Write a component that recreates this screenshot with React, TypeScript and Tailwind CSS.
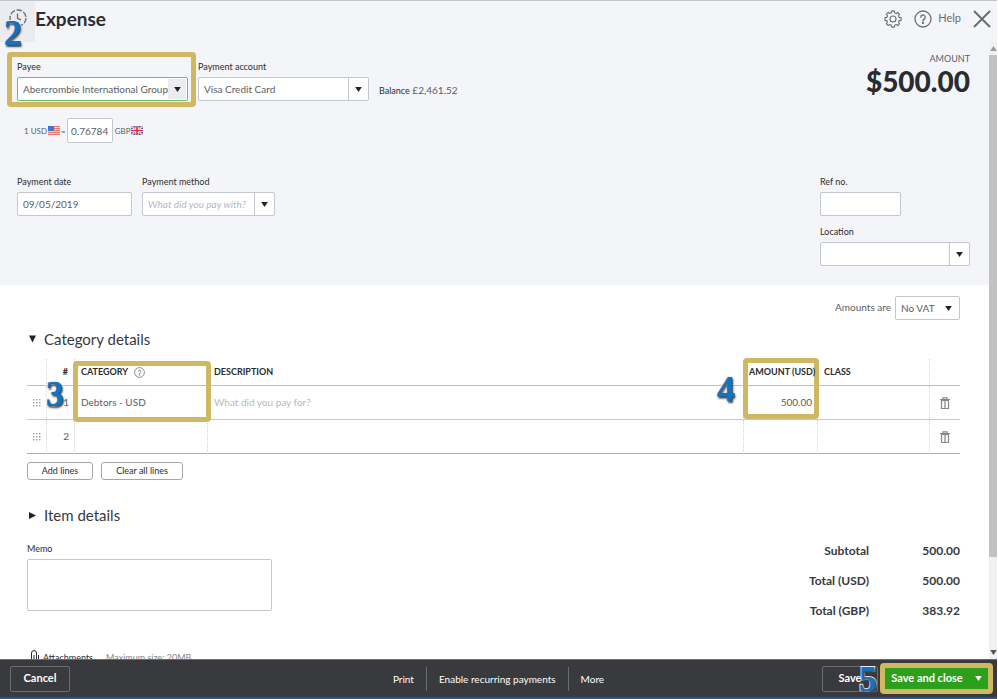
import type { ReactNode } from "react";
import clsx from "clsx";

const frame =
  "pointer-events-none absolute rounded-sm border-[5px] border-[#cfb763]";

function Caret({ className }: { className?: string }) {
  return (
    <svg viewBox="0 0 8 6" className={clsx("h-[5px] w-[7px]", className)} aria-hidden="true">
      <path d="M0 0h8L4 6z" fill="currentColor" />
    </svg>
  );
}

function Step({ n, className }: { n: number; className: string }) {
  return (
    <span
      className={clsx(
        "pointer-events-none absolute z-10 font-[family-name:'Liberation_Serif',serif] text-[36px] leading-8 font-bold text-[#1272c4] [-webkit-text-stroke:2px_white] [paint-order:stroke_fill] [text-shadow:0_0_1px_#444,1px_2px_2px_#444]",
        className
      )}
    >
      {n}
    </span>
  );
}

function Field({ id, label, className, children }: { id: string; label: string; className?: string; children: ReactNode }) {
  return (
    <div className={clsx("flex flex-col gap-[2px]", className)}>
      <label htmlFor={id} className="text-[9px] leading-4 text-[#2b2c2f]">
        {label}
      </label>
      {children}
    </div>
  );
}

interface DropdownProps {
  id: string;
  value: string;
  active?: boolean;
  placeholder?: boolean;
}

function Dropdown({ id, value, active, placeholder }: DropdownProps) {
  return (
    <div className="relative flex">
      <select
        id={id}
        className={clsx(
          "h-6 w-full appearance-none rounded-xs border bg-white pl-[5px] text-[10px] outline-none",
          active ? "border-[#6cbf68] pr-[18px]" : "border-[#c3c7cf] pr-[22px]",
          placeholder ? "text-[#b5b8bf] italic" : "text-[#5b5d63]"
        )}
      >
        <option>{value}</option>
      </select>
      <span
        className={clsx(
          "pointer-events-none absolute flex items-center justify-center text-[#222]",
          active
            ? "inset-y-[2px] right-[2px] w-[18px] bg-[#ebecf1]"
            : "inset-y-px right-px w-5 border-l border-[#c3c7cf]"
        )}
      >
        <Caret />
      </span>
    </div>
  );
}

function HelpIcon({ className }: { className: string }) {
  return (
    <svg viewBox="0 0 18 18" className={className} fill="none" stroke="currentColor" strokeWidth="1.3" aria-hidden="true">
      <circle cx="9" cy="9" r="8" />
      <path d="M6.8 7.2a2.2 2.2 0 1 1 3.5 1.8c-.8.6-1.3.9-1.3 1.9" strokeLinecap="round" />
      <circle cx="9" cy="13" r=".5" fill="currentColor" />
    </svg>
  );
}

function GearIcon() {
  // outline with eight teeth, four points per tooth
  const points = Array.from({ length: 32 }, (_, i) => {
    const tooth = Math.floor(i / 4);
    const offset = [-0.25, -0.17, 0.17, 0.25][i % 4];
    const r = i % 4 === 1 || i % 4 === 2 ? 8.2 : 6.4;
    const a = (tooth * Math.PI) / 4 + offset;
    return `${(9 + r * Math.cos(a)).toFixed(2)},${(9 + r * Math.sin(a)).toFixed(2)}`;
  }).join(" ");
  return (
    <svg viewBox="0 0 18 18" className="size-[18px]" fill="none" stroke="currentColor" strokeWidth="1.1" strokeLinejoin="round" aria-hidden="true">
      <polygon points={points} />
      <circle cx="9" cy="9" r="3" />
    </svg>
  );
}

function ClockIcon() {
  return (
    <svg viewBox="0 0 18 18" className="size-[18px]" fill="none" stroke="#6b6c72" strokeWidth="1.3" aria-hidden="true">
      <circle cx="9" cy="9" r="8" strokeDasharray="5.5 1.7" />
      <path d="M8.5 4.5v4.8l3.5 1.5" />
    </svg>
  );
}

function TrashIcon() {
  return (
    <svg viewBox="0 0 10 12" className="mx-auto h-3 w-[10px]" fill="none" stroke="#85878c" aria-hidden="true">
      <path d="M1.5 3.5h7v8h-7zM5 4v7M0 2.5h10M3 2.5V.8h4v1.7" strokeWidth="1.2" />
    </svg>
  );
}

function GripIcon() {
  return (
    <svg viewBox="0 0 8 8" className="ml-[6px] size-2" fill="#9b9da3" aria-hidden="true">
      {[0, 3, 6].map((y) => [0, 3, 6].map((x) => <rect key={`${x}-${y}`} x={x} y={y} width="1.4" height="1.4" />))}
    </svg>
  );
}

function UsFlag() {
  return (
    <svg viewBox="0 0 12 9" className="h-[9px] w-3" aria-label="US">
      <rect width="12" height="9" fill="#f6c9c3" />
      <path d="M0 .5h12M0 2.5h12M0 4.5h12M0 6.5h12M0 8.5h12" stroke="#e8786c" />
      <rect width="6" height="5" fill="#3f74d1" />
    </svg>
  );
}

function UkFlag() {
  return (
    <svg viewBox="0 0 12 9" className="h-[9px] w-3" aria-label="UK">
      <rect width="12" height="9" fill="#3b55a5" />
      <path d="M0 0l12 9M12 0L0 9" stroke="#fff" strokeWidth="1.8" />
      <path d="M0 0l12 9M12 0L0 9" stroke="#d8414f" strokeWidth=".6" />
      <path d="M6 0v9M0 4.5h12" stroke="#fff" strokeWidth="3" />
      <path d="M6 0v9M0 4.5h12" stroke="#dd2c3c" strokeWidth="1.6" />
    </svg>
  );
}

function TopBar() {
  return (
    <header className="flex h-[42px] shrink-0 items-stretch border-t border-[#c4c5ca] bg-[#f4f5f9]">
      <div className="relative flex w-[35px] justify-center bg-[#ebecf1] pt-2">
        <ClockIcon />
        <Step n={2} className="top-4 left-1" />
      </div>
      <h1 className="flex-1 pt-[6px] text-[19px] leading-6 font-bold text-[#2b2c2f]">Expense</h1>
      <div className="flex items-center pr-[6px] pb-[6px] text-[#6b6c72]">
        <button type="button" aria-label="Settings">
          <GearIcon />
        </button>
        <button type="button" className="ml-3 flex items-center gap-[6px] text-[11px]">
          <HelpIcon className="size-[18px]" />
          Help
        </button>
        <button type="button" aria-label="Close" className="ml-3">
          <svg viewBox="0 0 18 18" className="size-[18px]" stroke="currentColor" strokeWidth="2" aria-hidden="true">
            <path d="M1 1l16 16M17 1L1 17" />
          </svg>
        </button>
      </div>
    </header>
  );
}

function PaymentForm() {
  return (
    <section className="flex h-[243px] justify-between bg-[#f4f5f9] pt-[17px] pr-[19px] pl-[17px]">
      <div>
        <div className="flex gap-[10px]">
          <div className="relative w-[171px]">
            <Field id="payee" label="Payee">
              <Dropdown id="payee" value="Abercrombie International Group" active />
            </Field>
            <div className={clsx(frame, "-top-[7px] -right-2 -bottom-[6px] -left-[10px]")} />
          </div>
          <Field id="account" label="Payment account" className="w-[171px]">
            <Dropdown id="account" value="Visa Credit Card" />
          </Field>
          <p className="self-end pb-[2px] text-[10px] leading-4 text-[#5b5d63]">
            <span className="text-[9px] text-[#2b2c2f]">Balance</span> £2,461.52
          </p>
        </div>
        <div className="mt-[17px] flex items-center pl-[7px] text-[8px] text-[#5b5d63]">
          <label htmlFor="rate" className="flex items-center gap-px">
            1 USD <UsFlag /> =
          </label>
          <input
            id="rate"
            defaultValue="0.76784"
            className="mr-[2px] ml-px h-[25px] w-[46px] rounded-xs border border-[#c3c7cf] bg-white px-[3px] text-center text-[10px]"
          />
          <span className="flex items-center gap-px">
            GBP <UkFlag />
          </span>
        </div>
        <div className="mt-[31px] flex gap-[10px]">
          <Field id="date" label="Payment date" className="w-[115px]">
            <input
              id="date"
              defaultValue="09/05/2019"
              className="h-6 rounded-xs border border-[#c3c7cf] bg-white px-[5px] text-[10px] text-[#5b5d63]"
            />
          </Field>
          <Field id="method" label="Payment method" className="w-[133px]">
            <Dropdown id="method" value="What did you pay with?" placeholder />
          </Field>
        </div>
      </div>
      <div className="flex w-[150px] flex-col">
        <p className="-mt-2 text-right text-[9px] leading-4 text-[#5b5d63]">AMOUNT</p>
        <p className="text-right text-[28px] leading-7 font-black text-[#2b2c2f]">$500.00</p>
        <Field id="ref" label="Ref no." className="mt-[79px]">
          <input id="ref" className="h-6 w-[81px] rounded-xs border border-[#c3c7cf] bg-white px-[5px] text-[10px]" />
        </Field>
        <Field id="location" label="Location" className="mt-2">
          <Dropdown id="location" value="" />
        </Field>
      </div>
    </section>
  );
}

const dotted = "border-r border-r-[#d0d2d6] [border-right-style:dotted]";

function CategoryTable() {
  return (
    <table className="mt-[9px] w-full table-fixed border-separate border-spacing-0 text-[10px] text-[#5b5d63]">
      <colgroup>
        <col className="w-5" />
        <col className="w-7" />
        <col className="w-[133px]" />
        <col />
        <col className="w-[74px]" />
        <col className="w-[112px]" />
        <col className="w-[30px]" />
      </colgroup>
      <thead>
        <tr className="h-[27px] text-left text-[9px] text-[#2b2c2f] [&>th]:border-b [&>th]:border-b-[#b9bec8]">
          <th className={dotted} />
          <th className={clsx("relative pr-[6px] text-right", dotted)}>
            #
            <Step n={3} className="top-[19px] -left-px" />
          </th>
          <th className="relative pl-[6px]">
            <span className="flex items-center gap-[6px]">
              CATEGORY <HelpIcon className="size-[11px] text-[#6b6c72]" />
            </span>
            <div className={clsx(frame, "top-[2px] -right-[3px] -left-[2px] h-[61px]")} />
          </th>
          <th className="pl-[6px]">DESCRIPTION</th>
          <th className="relative pl-[5px] whitespace-nowrap">
            <div className={clsx(frame, "-top-px -right-px -left-px h-[61px]")} />
            <span className="relative">AMOUNT (USD)</span>
            <Step n={4} className="top-[14px] -left-[27px]" />
          </th>
          <th className={clsx("pl-[6px]", dotted)}>CLASS</th>
          <th />
        </tr>
      </thead>
      <tbody>
        {[1, 2].map((row) => (
          <tr
            key={row}
            className="h-[34px] [&>td]:border-b [&>td]:border-b-[#c6c8cc] last:[&>td]:border-b-[#a9abb0]"
          >
            <td className={dotted}>
              <GripIcon />
            </td>
            <td className={clsx("pr-[5px] text-right", dotted)}>{row}</td>
            <td className={clsx("pl-[6px]", dotted)}>{row === 1 && "Debtors - USD"}</td>
            <td className={clsx("pl-[6px] text-[#b5b8bf]", dotted)}>{row === 1 && "What did you pay for?"}</td>
            <td className={clsx("pr-[5px] text-right", dotted)}>{row === 1 && "500.00"}</td>
            <td className={dotted} />
            <td>
              <button type="button" aria-label={`Delete line ${row}`} className="block w-full">
                <TrashIcon />
              </button>
            </td>
          </tr>
        ))}
      </tbody>
    </table>
  );
}

const totals = [
  ["Subtotal", "500.00"],
  ["Total (USD)", "500.00"],
  ["Total (GBP)", "383.92"],
];

function Details() {
  const small = "h-[18px] rounded-[3px] border border-[#a5a7ad] text-[9px] text-[#2b2c2f]";
  return (
    <section className="pt-[11px] pr-[29px] pl-[27px]">
      <div className="flex items-start justify-end gap-1 text-[#5b5d63]">
        <label htmlFor="vat" className="text-[10px] leading-[22px]">
          Amounts are
        </label>
        <div className="relative flex w-[65px]">
          <select id="vat" className="h-6 w-full appearance-none rounded-xs border border-[#c3c7cf] bg-white pl-[5px] text-[10px]">
            <option>No VAT</option>
          </select>
          <Caret className="pointer-events-none absolute top-[10px] right-2 text-[#222]" />
        </div>
      </div>
      <h2 className="mt-2 text-[15px] leading-[22px] text-[#393a3d]">
        <button type="button" className="flex items-center gap-2">
          <svg viewBox="0 0 8 8" className="ml-[2px] h-2 w-[7px]" aria-hidden="true">
            <path d="M0 0h8L4 8z" fill="#222" />
          </svg>
          Category details
        </button>
      </h2>
      <CategoryTable />
      <div className="mt-2 flex gap-2">
        <button type="button" className={clsx(small, "w-[66px]")}>
          Add lines
        </button>
        <button type="button" className={clsx(small, "w-[82px]")}>
          Clear all lines
        </button>
      </div>
      <h2 className="mt-6 text-[15px] leading-[22px] text-[#393a3d]">
        <button type="button" className="flex items-center gap-2">
          <svg viewBox="0 0 8 8" className="ml-[2px] h-[7px] w-[7px]" aria-hidden="true">
            <path d="M0 0v8l8-4z" fill="#222" />
          </svg>
          Item details
        </button>
      </h2>
      <div className="mt-[15px] flex items-start justify-between">
        <Field id="memo" label="Memo" className="w-[245px]">
          <textarea id="memo" className="h-[52px] resize-none rounded-xs border border-[#c3c7cf] bg-white p-1 text-[10px]" />
        </Field>
        <dl className="grid grid-cols-[auto_91px] gap-y-[10px] text-right text-xs leading-5 font-bold text-[#393a3d]">
          {totals.map(([name, value]) => (
            <div key={name} className="contents">
              <dt>{name}</dt>
              <dd>{value}</dd>
            </div>
          ))}
        </dl>
      </div>
      <div className="mt-[29px] flex items-start text-[9px] leading-4 text-[#2b2c2f]">
        <svg viewBox="0 0 8 14" className="mr-1 ml-1 h-[14px] w-2" fill="none" stroke="currentColor" aria-hidden="true">
          <path d="M7.5 5v6a3.5 2.5 0 0 1-7 0V3a2.4 2.4 0 0 1 5 0v7a1 1 0 0 1-2.5 0V5" />
        </svg>
        <span>Attachments</span>
        <span className="ml-[13px] text-[#85878c]">Maximum size: 20MB</span>
      </div>
    </section>
  );
}

function Scrollbar() {
  return (
    <div className="flex w-2 shrink-0 flex-col items-center bg-[#f1f1f1] text-[#555]" aria-hidden="true">
      <Caret className="mt-1 mb-1 h-[3px] w-[5px] rotate-180 text-[#999]" />
      <div className="w-full flex-[505] bg-[#c1c1c1]" />
      <div className="flex-[89]" />
      <Caret className="mt-1 mb-1 h-[3px] w-[5px]" />
    </div>
  );
}

function Footer() {
  return (
    <footer className="grid h-10 shrink-0 grid-cols-[1fr_auto_1fr] items-center border-t border-b-2 border-t-[#6b6c72] border-b-[#24578a] bg-[#393a3d] text-[11px] text-white">
      <button type="button" className="ml-[10px] h-[26px] w-[60px] rounded-xs border border-[#6b6c72] font-bold">
        Cancel
      </button>
      <nav className="flex divide-x divide-[#6b6c72] text-[10px] leading-6">
        <button type="button" className="px-3">
          Print
        </button>
        <button type="button" className="px-3">
          Enable recurring payments
        </button>
        <button type="button" className="px-3">
          More
        </button>
      </nav>
      <div className="flex items-center justify-end gap-[2px] pr-1">
        <button type="button" className="relative h-[26px] w-[56px] rounded-xs border border-[#6b6c72] font-bold">
          Save
          <Step n={5} className="-top-[4px] right-0" />
        </button>
        <div className="flex h-[31px] w-[113px] rounded-sm border-[5px] border-[#cfb763] bg-[#2ca01c] font-bold">
          <button type="button" className="flex-1 whitespace-nowrap">
            Save and close
          </button>
          <button type="button" aria-label="More save options" className="px-[6px]">
            <Caret />
          </button>
        </div>
      </div>
    </footer>
  );
}

export default function App() {
  return (
    <div className="flex h-screen flex-col overflow-hidden bg-white pr-px font-[Lato,sans-serif]">
      <TopBar />
      <div className="flex min-h-0 flex-1">
        <main className="min-w-0 flex-1 overflow-hidden">
          <PaymentForm />
          <Details />
        </main>
        <Scrollbar />
      </div>
      <Footer />
    </div>
  );
}
